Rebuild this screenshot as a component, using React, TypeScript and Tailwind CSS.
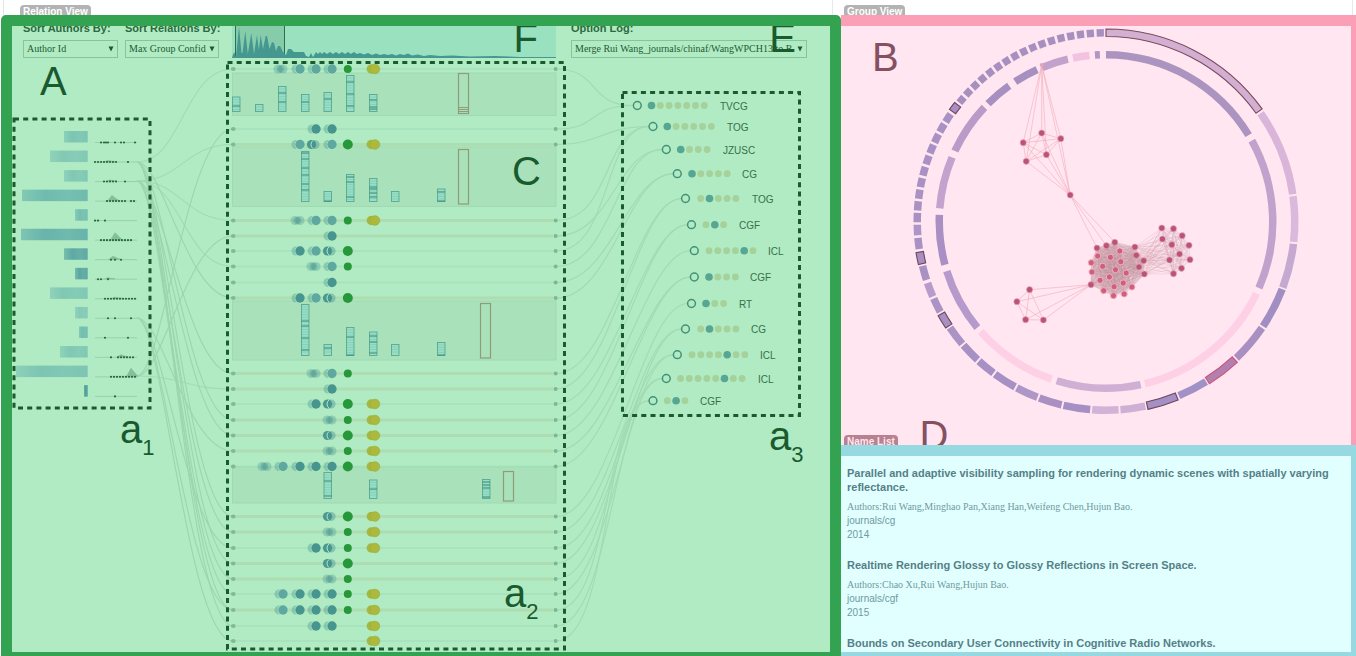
import React from "react";

type ClusterKind = "l" | "m" | "d" | "x";

interface RelationRow {
  y: number;
  clusters?: [number, ClusterKind][];
  green?: number;
  yellow?: boolean;
  tan?: boolean;
}

const INK = "#1a5a2f";

const relationRows: RelationRow[] = [
  { y: 69, clusters: [[283, "l"], [300, "m"], [316, "m"], [332, "m"]], green: 4, yellow: true },
  { y: 129, clusters: [[316, "d"], [332, "d"]] },
  { y: 144.5, clusters: [[300, "m"], [316, "x"], [332, "m"]], green: 5, yellow: true, tan: true },
  { y: 220.5, clusters: [[300, "l"], [316, "m"], [332, "m"]], green: 4, yellow: true, tan: true },
  { y: 236, clusters: [[332, "d"]], tan: true },
  { y: 251, clusters: [[300, "d"], [316, "m"], [332, "x"]], green: 5 },
  { y: 266.5, clusters: [[316, "l"], [332, "m"]], green: 4 },
  { y: 282.5, clusters: [[332, "d"]] },
  { y: 298, clusters: [[300, "d"], [316, "m"], [332, "x"]], green: 5, tan: true },
  { y: 373.5, clusters: [[316, "l"], [332, "m"]], green: 4, tan: true },
  { y: 389, clusters: [[332, "d"]], tan: true },
  { y: 404, clusters: [[316, "d"], [332, "x"]], green: 5, yellow: true },
  { y: 420, clusters: [[332, "l"]], green: 4, yellow: true, tan: true },
  { y: 435.5, clusters: [[332, "x"]], green: 5, yellow: true, tan: true },
  { y: 451, clusters: [[332, "l"]], green: 4, yellow: true, tan: true },
  { y: 466.5, clusters: [[267, "l"], [283, "m"], [300, "d"], [316, "d"], [332, "d"]], green: 5, yellow: true },
  { y: 516.5, clusters: [[332, "x"]], green: 5, yellow: true, tan: true },
  { y: 532, clusters: [[332, "l"]], green: 4, yellow: true, tan: true },
  { y: 548, clusters: [[316, "d"], [332, "x"]], green: 4, yellow: true },
  { y: 563.5, clusters: [[332, "x"]], green: 5, tan: true },
  { y: 579, clusters: [[332, "l"]], green: 4, tan: true },
  { y: 594, clusters: [[283, "m"], [300, "d"], [316, "d"], [332, "d"]], green: 4, yellow: true },
  { y: 610, clusters: [[283, "m"], [300, "d"], [316, "d"], [332, "d"]], green: 4, yellow: true, tan: true },
  { y: 626, clusters: [[316, "d"], [332, "d"]], yellow: true },
  { y: 641, yellow: true },
];

interface DetailPanel {
  top: number;
  bottom: number;
  base: number;
  stacks: [number, number, number[]][];
  frame: [number, number, number, number];
  frameMarks?: number[];
}

const detailPanels: DetailPanel[] = [
  {
    top: 73, bottom: 115.5, base: 111.5,
    stacks: [[232.5, 97, [106]], [255.5, 104.5, []], [278.5, 86.5, [93, 102]], [301.5, 94.5, [102]], [324, 92.5, [99]], [346.5, 75.5, [82, 94, 106]], [369.5, 94.5, [100, 107, 109]]],
    frame: [458.5, 73.5, 10, 40], frameMarks: [107.5, 109.5, 111.5],
  },
  {
    top: 147, bottom: 206.5, base: 201.5,
    stacks: [[301.5, 151.5, [153, 159, 168, 175, 184, 190]], [324, 191.5, [201]], [346.5, 174.5, [177, 182, 197]], [369.5, 178.5, [187, 189, 193, 197]], [391.5, 191.5, []], [437.5, 189, [192, 201]]],
    frame: [458.5, 149.5, 10, 54.5],
  },
  {
    top: 301, bottom: 360, base: 355.5,
    stacks: [[301.5, 304.5, [321, 326, 338, 350]], [324, 344.5, [348]], [346.5, 327.5, [337, 355]], [369.5, 332, [336, 342, 353]], [391.5, 344.5, []], [437.5, 342.5, [355]]],
    frame: [480.5, 303.5, 10, 54.5],
  },
  {
    top: 467, bottom: 503, base: 498.5,
    stacks: [[324, 472.5, [481, 496]], [369.5, 480, [489]], [482.5, 479.5, [482, 485, 488, 497]]],
    frame: [503.5, 471.5, 10, 29.5],
  },
];

interface Author {
  x: number;
  dots: number[];
  peak?: [number, number];
  shade: string;
}

const run = (from: number, to: number) => {
  const out: number[] = [];
  for (let v = from; v <= to; v += 3) out.push(v);
  return out;
};

const authors: Author[] = [
  { x: 64, dots: [101, 104, 106, 108, 115, 121, 124, 135], shade: "#7cc5b3" },
  { x: 50, dots: [...run(95, 116), 128], peak: [108, 2], shade: "#82c9b5" },
  { x: 64, dots: [...run(104, 116), 125], peak: [110, 2], shade: "#80c8b4" },
  { x: 22, dots: [...run(107, 125), 131, 134], peak: [112, 6], shade: "#6fbbae" },
  { x: 75, dots: [95, 98, 105], shade: "#74bfb0" },
  { x: 21, dots: run(101, 131), peak: [115, 8], shade: "#68b4ab" },
  { x: 64, dots: [111, 115, 121], peak: [113, 4], shade: "#5fa9a4" },
  { x: 75, dots: [98, 101, 108], peak: [108, 2], shade: "#5ba7a3" },
  { x: 50, dots: run(105, 135), peak: [115, 2], shade: "#80c8b4" },
  { x: 75, dots: [108, 115, 131], shade: "#84cab6" },
  { x: 79, dots: [105, 128], shade: "#72bdaf" },
  { x: 60, dots: [111, ...run(118, 135)], peak: [121, 3], shade: "#80c8b4" },
  { x: 16, dots: run(111, 135), peak: [131, 9], shade: "#7cc5b3" },
  { x: 84, dots: [115], shade: "#4f9d9b" },
];

interface Venue {
  name: string;
  x: number;
  y: number;
  start: number;
  count: number;
  active: number;
  label: number;
}

const venues: Venue[] = [
  { name: "TVCG", x: 637.3, y: 105.5, start: 651.5, count: 7, active: 0, label: 720 },
  { name: "TOG", x: 653, y: 126.5, start: 667.3, count: 6, active: 0, label: 727 },
  { name: "JZUSC", x: 666.3, y: 149.5, start: 680.7, count: 4, active: 0, label: 723 },
  { name: "CG", x: 677.3, y: 173.7, start: 692, count: 5, active: 0, label: 742 },
  { name: "TOG", x: 685.5, y: 198.5, start: 700.7, count: 5, active: 1, label: 752 },
  { name: "CGF", x: 691.5, y: 224.7, start: 706, count: 3, active: 1, label: 739 },
  { name: "ICL", x: 694.3, y: 250.7, start: 709, count: 6, active: 4, label: 768 },
  { name: "CGF", x: 694.3, y: 277, start: 709, count: 4, active: 0, label: 750 },
  { name: "RT", x: 691.5, y: 303.5, start: 706, count: 3, active: 0, label: 739 },
  { name: "CG", x: 685.5, y: 329, start: 700.7, count: 5, active: 1, label: 751 },
  { name: "ICL", x: 677.3, y: 354.7, start: 692, count: 7, active: 4, label: 760 },
  { name: "ICL", x: 666.3, y: 378.5, start: 680.5, count: 8, active: 5, label: 758 },
  { name: "CGF", x: 653, y: 400.7, start: 667.3, count: 3, active: 1, label: 700 },
];

// [author baseline, relation row index]
const authorLinks: [number, number][] = [
  [162, 0], [162, 8], [162, 12], [162, 16], [162, 19], [162, 22], [162, 23],
  [181, 2], [181, 3], [181, 6], [181, 9], [181, 13], [181, 17], [181, 20], [181, 21],
  [318, 14], [318, 18], [318, 24], [318, 22],
  [376, 1], [376, 4], [376, 10],
];

// [relation row index, venue index]
const venueLinks: [number, number][] = [
  [0, 0], [1, 0], [2, 1], [3, 1], [4, 2], [5, 1], [6, 2], [7, 3], [8, 3], [9, 4], [10, 4], [11, 5], [12, 5],
  [13, 6], [14, 7], [15, 7], [16, 8], [17, 9], [18, 10], [19, 9], [20, 11], [21, 10], [22, 12], [23, 11], [24, 12],
];

function BigLabel({ x, y, text, sub, fill = INK }: { x: number; y: number; text: string; sub?: string; fill?: string }) {
  return (
    <text x={x} y={y} fontSize={40} fill={fill}>
      {text}
      {sub && <tspan dy={12} fontSize={22}>{sub}</tspan>}
    </text>
  );
}

function Cluster({ x, y, kind }: { x: number; y: number; kind: ClusterKind }) {
  if (kind === "l") {
    return (
      <g fill="#3f8f90">
        <circle cx={x - 5} cy={y} r={4.5} opacity={0.3} />
        <circle cx={x} cy={y} r={4.5} opacity={0.3} />
        <circle cx={x - 2.5} cy={y} r={3.8} opacity={0.35} />
      </g>
    );
  }
  if (kind === "x") {
    return (
      <g>
        <circle cx={x - 1} cy={y} r={4.6} fill="#3f8f90" opacity={0.4} />
        <circle cx={x - 4.5} cy={y} r={4.6} fill="#3f8f8b" opacity={0.9} />
        <path d={`M${x - 3} ${y - 4}a5 5 0 0 0 0 8`} fill="none" stroke="#b1ebc3" strokeWidth={1} />
      </g>
    );
  }
  return (
    <g>
      <circle cx={x - 4} cy={y} r={4.5} fill="#3f8f90" opacity={0.35} />
      <circle cx={x} cy={y} r={5.2} fill="#b1ebc3" />
      <circle cx={x} cy={y} r={4.7} fill={kind === "d" ? "#47958f" : "#5fa89f"} />
    </g>
  );
}

function Dashed({ x, y, w, h }: { x: number; y: number; w: number; h: number }) {
  return <rect x={x} y={y} width={w} height={h} fill="none" stroke={INK} strokeWidth={3} strokeDasharray="5 4.2" />;
}

function RelationChart() {
  return (
    <svg viewBox="12 58 818 594" className="block h-auto w-full" role="img" aria-label="Author, relation and venue flow">
      <defs>
        {authors.map((a, i) => (
          <linearGradient key={i} id={`bar${i}`}>
            <stop offset="0" stopColor={a.shade} stopOpacity="0.7" />
            <stop offset="0.35" stopColor={a.shade} />
            <stop offset="0.7" stopColor={a.shade} stopOpacity="0.9" />
            <stop offset="1" stopColor={a.shade} />
          </linearGradient>
        ))}
      </defs>

      <g fill="none" stroke="#7fb894" strokeWidth={1.1} opacity={0.42}>
        {authorLinks.map(([y, r], i) => {
          const t = relationRows[r].y;
          const near = Math.abs(t - y) < 130;
          return (
            <path key={i} strokeOpacity={near ? 0.7 : 1} d={`M137 ${y}C${near ? 182 : 163} ${y} ${near ? 184 : 187} ${t} 233 ${t}`} />
          );
        })}
      </g>
      <g fill="none" stroke="#7fb894" strokeWidth={1.1} opacity={0.32}>
        {venueLinks.map(([r, v], i) => {
          const s = relationRows[r].y;
          const { x, y } = venues[v];
          return <path key={i} d={`M556 ${s}C${s > y + 80 ? 612 : 600} ${s} ${x - 50} ${y} ${x - 4} ${y}`} />;
        })}
      </g>

      {authors.map((a, i) => {
        const top = 131 + i * 19.55;
        const base = 142.5 + i * 19.53;
        return (
          <g key={i}>
            <rect x={a.x} y={top} width={87.7 - a.x} height={11.5} fill={`url(#bar${i})`} />
            <line x1={95} x2={137} y1={base} y2={base} stroke="#92c9a3" strokeWidth={0.8} />
            {a.peak && (
              <path d={`M${a.peak[0] - 5} ${base}L${a.peak[0]} ${base - a.peak[1]}L${a.peak[0] + 3} ${base - a.peak[1] * 0.6}L${a.peak[0] + 7} ${base - 1}V${base}Z`} fill="#84bf9b" />
            )}
            {a.dots.map((d, k) => <circle key={k} cx={d} cy={base} r={1.05} fill="#22663a" />)}
          </g>
        );
      })}

      {detailPanels.map((p, i) => (
        <g key={i}>
          <rect x={232.5} y={p.top} width={323.5} height={p.bottom - p.top} fill="#a9e2ba" stroke="#9edab2" strokeWidth={1} />
          {p.stacks.map(([x, top, marks], k) => {
            const lines: number[] = [];
            for (let v = top + 2.5; v < p.base - 1; v += 2.5) lines.push(v);
            return (
              <g key={k} stroke="#57a893">
                <rect x={x} y={top} width={7.5} height={p.base - top} fill="#98dec5" strokeWidth={0.9} />
                {lines.map((v) => <line key={v} x1={x} x2={x + 7.5} y1={v} y2={v} strokeWidth={0.6} opacity={0.4} />)}
                {marks.map((v) => <line key={v} x1={x} x2={x + 7.5} y1={v} y2={v} stroke="#3a8d7c" strokeWidth={1} />)}
              </g>
            );
          })}
          <rect x={p.frame[0]} y={p.frame[1]} width={p.frame[2]} height={p.frame[3]} fill="none" stroke="#8f9c78" strokeWidth={1.2} />
          {p.frameMarks?.map((v) => <line key={v} x1={p.frame[0]} x2={p.frame[0] + 10} y1={v} y2={v} stroke="#8f9c78" strokeWidth={1} />)}
        </g>
      ))}

      {relationRows.map((r) => (
        <g key={r.y}>
          <line x1={236} x2={553} y1={r.y} y2={r.y} stroke={r.tan ? "#aed6aa" : "#a2dfba"} strokeWidth={r.tan ? 3 : 2} opacity={0.65} />
          <ellipse cx={233.3} cy={r.y} rx={2.4} ry={1.9} fill="#83b894" />
          <circle cx={555.6} cy={r.y} r={2} fill="#7eb593" />
          {r.clusters?.map(([x, kind]) => <Cluster key={x} x={x} y={r.y} kind={kind} />)}
          {r.green && <circle cx={347.8} cy={r.y} r={r.green} fill="#26983a" />}
          {r.yellow && (
            <>
              <circle cx={371.3} cy={r.y} r={4.7} fill="#a5b73f" />
              <circle cx={375} cy={r.y} r={4.8} fill="#adb93d" stroke="#96b345" strokeWidth={0.7} />
            </>
          )}
        </g>
      ))}

      {venues.map((v, i) => (
        <g key={i}>
          <circle cx={v.x} cy={v.y} r={3.9} fill="#b1ebc3" stroke="#429178" strokeWidth={1.5} />
          {Array.from({ length: v.count }, (_, k) => (
            <circle key={k} cx={v.start + k * 8.8} cy={v.y} r={k === v.active ? 3.8 : 3.4} fill={k === v.active ? "#57a693" : "#a5d19a"} />
          ))}
          <text x={v.label} y={v.y + 4} fontSize={10} fill="#37704b">{v.name}</text>
        </g>
      ))}

      <Dashed x={14} y={119} w={136} h={289} />
      <Dashed x={227.5} y={62.5} w={337} h={586.5} />
      <Dashed x={622.5} y={92.5} w={177} h={323} />

      <BigLabel x={40} y={95} text="A" />
      <BigLabel x={512} y={184.5} text="C" />
      <BigLabel x={120} y={443} text="a" sub="1" />
      <BigLabel x={504} y={607} text="a" sub="2" />
      <BigLabel x={769} y={449.5} text="a" sub="3" />
    </svg>
  );
}

function Histogram() {
  return (
    <svg viewBox="232 26 324 32" preserveAspectRatio="none" className="block h-8 w-full" role="img" aria-label="Relation distribution">
      <rect x={232} y={26} width={324} height={32} fill="#9ae1bf" />
      <rect x={235.5} y={20} width={49} height={37.5} fill="#86cbaa" stroke="#2c6e4f" strokeWidth={1} />
      <path
        fill="#44988f"
        d="M232 57.5L234 52L236 57L239 27L241.500 53L242.500 53L245.300 31L247.800 54L251.300 33L254 54L257 35L258.800 50L260.700 35L263 49L265.700 36L267 36L269.500 49L272 42L274 43L276 51L278 46L280 46L283 52L286 55L288 49L291 49L294 52L304 52L306 56L309 57L311 53L313 57L316 52L318 54L320 52L322 54L324 52L327 54L330 52L333 54L336 52L339 54L342 52L345 54L348 52L351 54L354 52L357 54L360 53L364 54.500L368 53L372 55L376 53.500L380 55L384 54L388 55L392 54L396 55.500L400 54L404 55L408 53.500L412 55.500L418 54.500L424 56L430 55L440 56L452 55.500L470 56.500L495 56L520 57L556 57V58H232Z"
      />
    </svg>
  );
}

interface Segment {
  from: number;
  to: number;
  fill: string;
  edge?: string;
}

const outerRing: Segment[] = [
  { from: 0, to: 54.2, fill: "#d3b0d2", edge: "#7b4a5f" },
  { from: 55, to: 81.7, fill: "#d9b5d9" },
  { from: 82.3, to: 96.2, fill: "#dab9dc" },
  { from: 96.8, to: 110.5, fill: "#c6a9d0" },
  { from: 111, to: 123.7, fill: "#a18fc3" },
  { from: 124.3, to: 136.3, fill: "#a990c2" },
  { from: 137, to: 147.5, fill: "#b280ae", edge: "#cf5078" },
  { from: 148, to: 157.3, fill: "#a191c6" },
  { from: 158, to: 167.4, fill: "#a590c4", edge: "#6d4560" },
  { from: 168, to: 175.6, fill: "#ceb0d5" },
  { from: 176.2, to: 184.2, fill: "#d2b2d6" },
  { from: 184.8, to: 193, fill: "#a68fc3" },
  { from: 193.6, to: 200.7, fill: "#a98fc2" },
  { from: 201.3, to: 208.2, fill: "#ae97c7" },
  { from: 208.8, to: 216, fill: "#a690c4" },
  { from: 216.6, to: 222.3, fill: "#a791c4" },
  { from: 222.9, to: 229, fill: "#a690c4" },
  { from: 229.6, to: 235.8, fill: "#ab93c5" },
  { from: 236.4, to: 240.7, fill: "#a98fc1", edge: "#6d4560" },
  { from: 241.4, to: 245.9, fill: "#ab93c5" },
  { from: 246.6, to: 251, fill: "#b69bcb" },
  { from: 252, to: 256.4, fill: "#a991c4" },
  { from: 257.1, to: 260.7, fill: "#a98fc1", edge: "#6d4560" },
  { from: 261.6, to: 265, fill: "#a991c4" },
  { from: 265.8, to: 269, fill: "#ae95c7" },
  ...Array.from({ length: 10 }, (_, i) => ({ from: 269.8 + i * 3.56, to: 272.6 + i * 3.56, fill: "#a991c3" })),
  { from: 305.6, to: 308.2, fill: "#a98fc1", edge: "#6d4560" },
  ...Array.from({ length: 17 }, (_, i) => ({ from: 309 + i * 3.01, to: 311.2 + i * 3.01, fill: "#a790bf" })),
];

const innerRing: Segment[] = [
  { from: 0, to: 58.8, fill: "#ac94c1" },
  { from: 61, to: 113.5, fill: "#c0a2cc" },
  { from: 115.5, to: 166.5, fill: "#fdd0e6" },
  { from: 168, to: 197.2, fill: "#d0afd4" },
  { from: 199, to: 228.7, fill: "#fdd0e6" },
  { from: 230.5, to: 252.7, fill: "#b59acb" },
  { from: 255, to: 272.3, fill: "#a98fc3" },
  { from: 274.5, to: 292.6, fill: "#c3a2cd" },
  { from: 295, to: 313.2, fill: "#b99ac8" },
  { from: 315, to: 324.5, fill: "#a78fc1" },
  { from: 327, to: 335.6, fill: "#a78fc1" },
  { from: 337.5, to: 346.8, fill: "#c2a1cc" },
  { from: 348.6, to: 354.3, fill: "#f3c2e0" },
  { from: 356.2, to: 357.9, fill: "#b295c2" },
];

const CX = 1106;
const CY = 221.5;

function arcPath(from: number, to: number, inner: number, outer: number) {
  const point = (deg: number, r: number) => {
    const a = (deg * Math.PI) / 180;
    return `${(CX + r * Math.sin(a)).toFixed(2)} ${(CY - r * Math.cos(a)).toFixed(2)}`;
  };
  return `M${point(from, outer)}A${outer} ${outer} 0 0 1 ${point(to, outer)}L${point(to, inner)}A${inner} ${inner} 0 0 0 ${point(from, inner)}Z`;
}

type Point = [number, number];

const upperGroup: Point[] = [[1023.2, 142.7], [1041.7, 133], [1060.8, 138.7], [1046.4, 154.7], [1026.2, 161.3]];
const apex: Point = [1041.7, 65];
const hub: Point = [1070.2, 195];
const lowerHub: Point = [1091, 284.7];
const lowerGroup: Point[] = [[1029.6, 289.7], [1016.9, 301.7], [1025.6, 319.7], [1043.4, 320]];
const coreRim: Point[] = [[1114.8, 242.3], [1106.4, 245.7], [1097, 248], lowerHub];
const core: Point[] = [
  [1119.8, 251], [1097.7, 256], [1110.4, 257.3], [1091.3, 262.7], [1120.8, 261.7], [1102.7, 266.3], [1092, 272],
  [1115.5, 269.7], [1126.2, 273], [1109.4, 277], [1100, 280.3], [1123.2, 283], [1103.7, 290.7], [1114.1, 286.7],
  [1131.9, 287], [1124.2, 294], [1113.5, 295.7],
];
const bridge: Point[] = [[1134.9, 247], [1136.3, 255.3], [1143.7, 260.7], [1139, 267], [1144.3, 274]];
const rightGroup: Point[] = [
  [1161.8, 228], [1173.5, 228.7], [1182.2, 235.7], [1162.4, 239], [1171.8, 244.7], [1189, 245.3], [1179.5, 254],
  [1169.5, 260], [1190, 259.7], [1181.5, 268.3], [1173.5, 273.7],
];

const pairs = (pts: Point[]) => pts.flatMap((a, i) => pts.slice(i + 1).map((b) => [a, b] as [Point, Point]));
const toLines = (list: [Point, Point][]) => list.map(([a, b]) => `M${a[0]} ${a[1]}L${b[0]} ${b[1]}`).join("");

const hull = "M1097 248L1114.800 242.300L1134.900 247L1143.700 260.700L1144.300 274L1131.900 287L1113.500 295.700L1103.700 290.700L1091 284.700L1091.300 262.700Z";
const denseLines = toLines([...pairs([...coreRim, ...core, ...bridge]), ...pairs(rightGroup)]);
const bridgeLines = toLines(bridge.flatMap((a) => rightGroup.map((b) => [a, b] as [Point, Point])));
const sparseLines = toLines([
  ...pairs(upperGroup),
  ...upperGroup.flatMap((p) => [[p, apex], [p, hub]] as [Point, Point][]),
  [apex, hub],
  ...coreRim.slice(0, 3).map((p) => [hub, p] as [Point, Point]),
  ...pairs(lowerGroup),
  ...lowerGroup.map((p) => [lowerHub, p] as [Point, Point]),
]);

function GroupChart() {
  return (
    <svg viewBox="841 26 510 419" className="block h-auto w-full" role="img" aria-label="Group membership rings and network">
      {outerRing.map((s, i) => (
        <path key={i} d={arcPath(s.from, s.to, 185, 192.5)} fill={s.fill} stroke={s.edge ?? "none"} strokeWidth={1.1} />
      ))}
      {innerRing.map((s, i) => (
        <path key={i} d={arcPath(s.from, s.to, 163, 170.5)} fill={s.fill} />
      ))}
      <path d={hull} fill="#dcb4c0" opacity={0.6} />
      <path d={denseLines} fill="none" stroke="#b98d98" strokeWidth={0.6} opacity={0.34} />
      <path d={bridgeLines} fill="none" stroke="#cf9aa6" strokeWidth={0.5} opacity={0.5} />
      <path d={sparseLines} fill="none" stroke="#f0a3ae" strokeWidth={0.7} opacity={0.75} />
      <circle cx={apex[0]} cy={apex[1]} r={2} fill="#e0a5bd" />
      {core.map(([x, y]) => (
        <circle key={`${x}-${y}`} cx={x} cy={y} r={3.1} fill="#cd607f" stroke="#f6b6c4" strokeWidth={0.9} />
      ))}
      {[...upperGroup, hub, ...lowerGroup, ...coreRim, ...bridge, ...rightGroup].map(([x, y]) => (
        <circle key={`${x}-${y}`} cx={x} cy={y} r={3.1} fill="#ba5376" stroke="#efb0c4" strokeWidth={0.6} />
      ))}
      <BigLabel x={872} y={71} text="B" fill="#855060" />
      <BigLabel x={919.500} y={449} text="D" fill="#855060" />
    </svg>
  );
}

function Picker({ id, label, options, className }: { id: string; label: string; options: string[]; className: string }) {
  return (
    <div className={className}>
      <label htmlFor={id} className="-mt-[5px] mb-[5px] block text-[11px] leading-[14px] font-bold whitespace-nowrap text-[#2a6a3e]">
        {label}
      </label>
      <div className="relative">
        <select
          id={id}
          className="block h-[18px] w-full appearance-none overflow-hidden border border-[#86c49b] bg-transparent pr-3 pl-[3px] font-['Liberation_Serif',serif] text-[10px] leading-4 text-[#1d5c33]"
        >
          {options.map((o) => <option key={o}>{o}</option>)}
        </select>
        <svg viewBox="0 0 6 6" className="pointer-events-none absolute top-[6px] right-1 size-1.5" aria-hidden="true">
          <path d="M0.500 0.500H5.500L3 5.500Z" fill={INK} />
        </svg>
      </div>
    </div>
  );
}

function Tag({ children, className }: { children: React.ReactNode; className: string }) {
  return (
    <h2 className={`h-2.5 overflow-hidden rounded-t-[4px] px-[3px] text-[10px] leading-[13px] font-bold whitespace-nowrap ${className}`}>
      {children}
    </h2>
  );
}

interface Paper {
  title: string;
  authors: string;
  venue?: string;
  year?: string;
}

const papers: Paper[] = [
  {
    title: "Parallel and adaptive visibility sampling for rendering dynamic scenes with spatially varying reflectance.",
    authors: "Authors:Rui Wang,Minghao Pan,Xiang Han,Weifeng Chen,Hujun Bao.",
    venue: "journals/cg",
    year: "2014",
  },
  {
    title: "Realtime Rendering Glossy to Glossy Reflections in Screen Space.",
    authors: "Authors:Chao Xu,Rui Wang,Hujun Bao.",
    venue: "journals/cgf",
    year: "2015",
  },
  { title: "Bounds on Secondary User Connectivity in Cognitive Radio Networks.", authors: "" },
];

export default function App() {
  return (
    <div className="flex h-screen flex-col overflow-hidden bg-white font-['Liberation_Sans',Arial,sans-serif]">
      <header className="grid h-[15px] shrink-0 grid-cols-[832fr_524fr] items-end">
        <div className="ml-[3px] flex h-full items-end border-l border-[#e4e4e4] pl-4">
          <Tag className="bg-[#b3b3b3] text-white">Relation View</Tag>
        </div>
        <div className="mr-[3px] flex h-full items-end border-x border-[#e8e8e8] pl-[11px]">
          <Tag className="bg-[#b3b3b3] text-white">Group View</Tag>
        </div>
      </header>

      <main className="grid min-h-0 flex-1 grid-cols-[841fr_515fr]">
        <section className="ml-px overflow-hidden rounded-t-[5px] border-x-[11px] border-t-[11px] border-b-4 border-[#33a351] bg-[#b1ebc3]">
          <div className="relative flex h-8 overflow-hidden pr-[23px] pl-[11px]">
            <Picker id="sort-authors" label="Sort Authors By:" options={["Author Id"]} className="mr-[7px] w-[95px] shrink-0" />
            <Picker id="sort-relations" label="Sort Relations By:" options={["Max Group Confidence"]} className="w-[94px] shrink-0" />
            <div className="relative mr-[15px] ml-[13px] min-w-0 flex-1">
              <Histogram />
              <span className="absolute -top-2 right-[18px] text-[40px] leading-none text-[#1a5a2f]">F</span>
            </div>
            <Picker id="option-log" label="Option Log:" options={["Merge Rui Wang_journals/chinaf/WangWPCH13 to R"]} className="w-[236px] shrink-0" />
            <span className="pointer-events-none absolute -top-2 right-[34px] text-[40px] leading-none text-[#1a5a2f]">E</span>
          </div>
          <RelationChart />
        </section>

        <div className="flex min-h-0 flex-col">
          <section className="relative shrink-0 border-t-[11px] border-r-[5px] border-[#fb9fb6] bg-[#ffe6f1]">
            <GroupChart />
            <Tag className="absolute bottom-0 left-[3px] bg-[#b9808f] text-[#ffe6f1]">Name List</Tag>
          </section>
          <section className="min-h-0 flex-1 overflow-hidden border-t-[11px] border-r-[5px] border-b-4 border-[#96d9e1] bg-[#e1ffff]">
            <ul className="flex flex-col gap-4 px-1.5 pt-2.5 text-[10px] leading-[14px] text-[#6f9aa0]">
              {papers.map((p) => (
                <li key={p.title}>
                  <h3 className="mb-1.5 text-[11px] font-bold text-[#557f87]">{p.title}</h3>
                  {p.authors && <p className="font-['Liberation_Serif',serif]">{p.authors}</p>}
                  {p.venue && <p>{p.venue}</p>}
                  {p.year && <p>{p.year}</p>}
                </li>
              ))}
            </ul>
          </section>
        </div>
      </main>
    </div>
  );
}
